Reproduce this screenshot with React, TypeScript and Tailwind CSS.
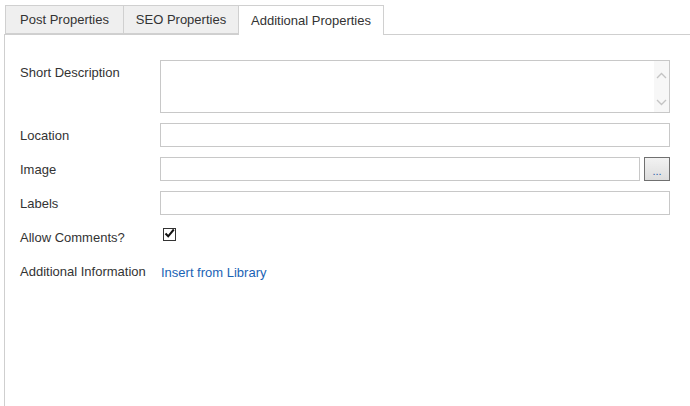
import { useState } from "react";

const tabs = [
  { label: "Post Properties", width: "w-[119px]" },
  { label: "SEO Properties", width: "w-[116px]" },
  { label: "Additional Properties", width: "w-[146px]" },
];

const Chevron = ({ up }: { up?: boolean }) => (
  <svg width="11" height="7" viewBox="0 0 11 7" fill="none">
    <path
      d={up ? "M1 6 L5.5 1.5 L10 6" : "M1 1 L5.5 5.5 L10 1"}
      stroke="#c4c4c4"
      strokeWidth="1.4"
    />
  </svg>
);

const FieldRow = ({ label, children }: { label: string; children: React.ReactNode }) => (
  <div className="flex items-start">
    <div className="w-[140px] shrink-0 pt-[5px] leading-4">{label}</div>
    <div className="flex-1">{children}</div>
  </div>
);

const App = () => {
  const [active, setActive] = useState(2);
  const [allowComments, setAllowComments] = useState(true);

  return (
    <div
      className="flex h-[406px] flex-col bg-white pt-[5px] text-[13px] text-[#333]"
      style={{ fontFamily: '"Liberation Sans", Arial, sans-serif' }}
    >
      {/* Tabs */}
      <div className="relative z-10 ml-[5px] flex">
        {tabs.map((tab, i) => (
          <button
            key={tab.label}
            onClick={() => setActive(i)}
            className={`${tab.width} -ml-px whitespace-nowrap text-center leading-4 first:ml-0 ${
              i === active
                ? "h-[30px] border border-b-0 border-[#d0d0d0] bg-white pt-[1px]"
                : "h-[29px] border border-[#d0d0d0] bg-[#efefef] pt-[1px]"
            }`}
          >
            {tab.label}
          </button>
        ))}
      </div>

      {/* Panel */}
      <div className="ml-[4px] -mt-px flex flex-1 flex-col gap-[10px] border-l border-t border-[#cfcfcf] pl-[15px] pr-[20px] pt-[25px]">
        <FieldRow label="Short Description">
          <div className="flex h-[53px] border border-[#c8c8c8]">
            <textarea className="flex-1 resize-none overflow-hidden px-1 outline-none" />
            <div className="flex w-[15px] flex-col items-center justify-between bg-[#f7f7f7] pb-[6px] pt-[11px]">
              <Chevron up />
              <Chevron />
            </div>
          </div>
        </FieldRow>

        <FieldRow label="Location">
          <input className="h-[24px] w-full border border-[#c8c8c8] px-1 outline-none" />
        </FieldRow>

        <FieldRow label="Image">
          <div className="flex gap-[4px]">
            <input className="h-[24px] flex-1 border border-[#c8c8c8] px-1 outline-none" />
            <button className="h-[24px] w-[26px] border border-[#707070] bg-gradient-to-b from-[#f2f2f2] to-[#dddddd] pt-[4px] text-[11px] leading-4 text-[#2a5fa8]">
              ...
            </button>
          </div>
        </FieldRow>

        <FieldRow label="Labels">
          <input className="h-[24px] w-full border border-[#c8c8c8] px-1 outline-none" />
        </FieldRow>

        <FieldRow label="Allow Comments?">
          <div className="h-[24px] pl-[3px] pt-[3px]">
            <button
              onClick={() => setAllowComments(!allowComments)}
              className="flex h-[13px] w-[13px] items-center justify-center border border-[#333] bg-white"
            >
              {allowComments && (
                <svg width="11" height="11" viewBox="0 0 11 11" className="-mt-[2px]">
                  <path d="M1.5 5.5 L4.2 8.3 L9.8 1.5" fill="none" stroke="#111" strokeWidth="2" />
                </svg>
              )}
            </button>
          </div>
        </FieldRow>

        <FieldRow label="Additional Information">
          <a href="#" className="block pl-[1px] pt-[6px] leading-4 text-[#1a63b5]">
            Insert from Library
          </a>
        </FieldRow>
      </div>
    </div>
  );
};

export default App;
